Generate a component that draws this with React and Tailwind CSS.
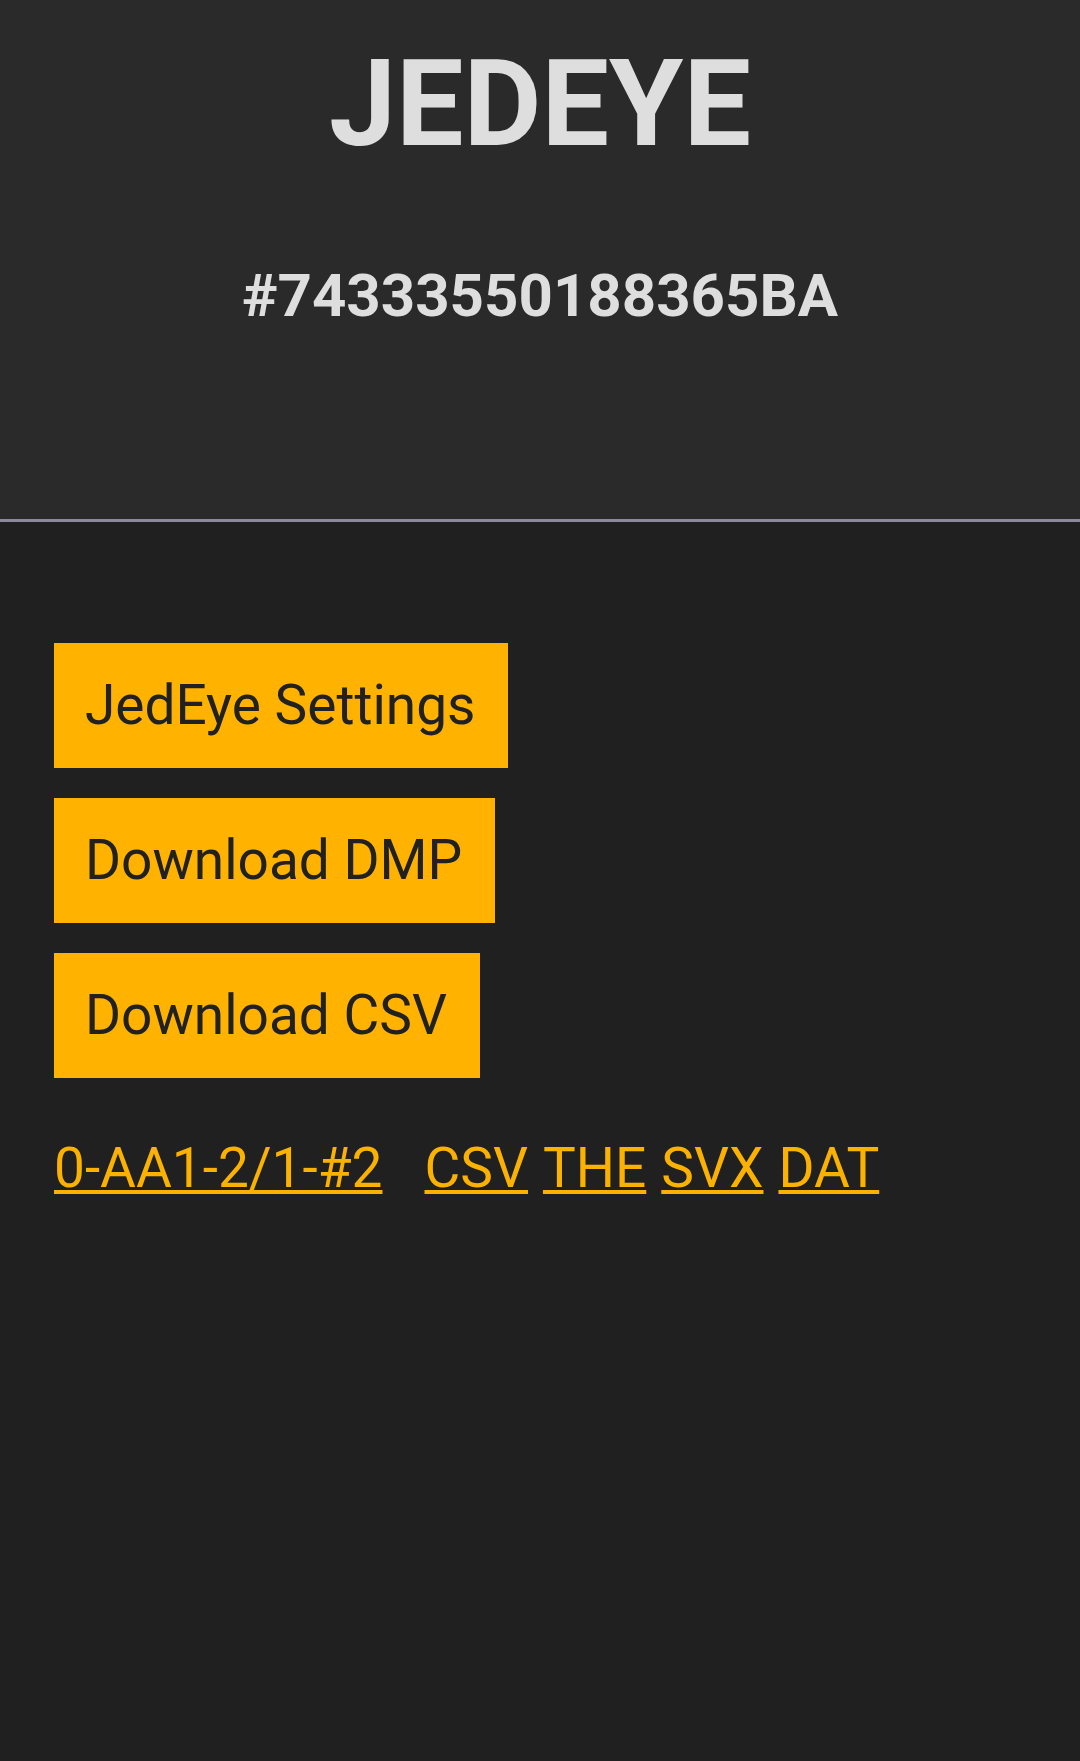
const links = ["CSV", "THE", "SVX", "DAT"];

const buttons = ["JedEye Settings", "Download DMP", "Download CSV"];

export default function App() {
  return (
    <div
      className="min-h-screen w-full bg-[#202020]"
      style={{ fontFamily: "Roboto, 'Noto Sans', sans-serif" }}
    >
      <header className="flex h-[519px] flex-col items-center bg-[#2a2a2a] pt-[44px]">
        <h1 className="text-[120px] font-bold leading-none text-[#dedede]">JEDEYE</h1>
        <h2 className="mt-[102px] text-[60px] font-bold leading-none text-[#dedede]">
          #74333550188365BA
        </h2>
      </header>
      <div className="h-[3px] bg-[#8b8a9b]" />

      <main className="flex flex-col items-start px-[54px] pt-[121px]">
        <div className="flex flex-col items-start gap-[30px]">
          {buttons.map((label) => (
            <button
              key={label}
              className="flex h-[125px] items-center bg-[#ffb300] pl-[31px] pr-[33px] text-[55px] leading-none text-[#212121]"
            >
              {label}
            </button>
          ))}
        </div>

        <div className="mt-[63px] flex items-baseline text-[55px] leading-none text-[#fbb100]">
          <a href="#" className="underline decoration-4 underline-offset-[3px]">
            0-AA1-2/1-#2
          </a>
          <div className="ml-[42px] flex gap-[15px]">
            {links.map((l) => (
              <a key={l} href="#" className="underline decoration-4 underline-offset-[3px]">
                {l}
              </a>
            ))}
          </div>
        </div>
      </main>
    </div>
  );
}
